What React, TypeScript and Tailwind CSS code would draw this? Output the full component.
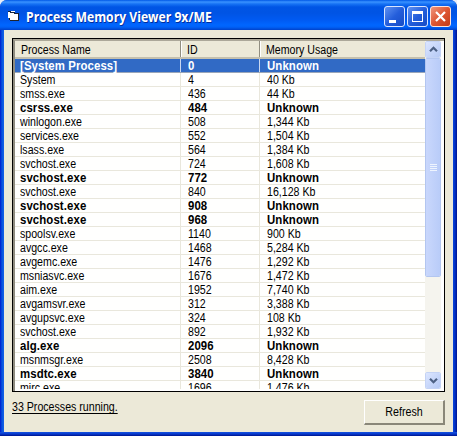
const rows: [string, string, string][] = [
  ['[System Process]', '0', 'Unknown'],
  ['System', '4', '40 Kb'],
  ['smss.exe', '436', '44 Kb'],
  ['csrss.exe', '484', 'Unknown'],
  ['winlogon.exe', '508', '1,344 Kb'],
  ['services.exe', '552', '1,504 Kb'],
  ['lsass.exe', '564', '1,384 Kb'],
  ['svchost.exe', '724', '1,608 Kb'],
  ['svchost.exe', '772', 'Unknown'],
  ['svchost.exe', '840', '16,128 Kb'],
  ['svchost.exe', '908', 'Unknown'],
  ['svchost.exe', '968', 'Unknown'],
  ['spoolsv.exe', '1140', '900 Kb'],
  ['avgcc.exe', '1468', '5,284 Kb'],
  ['avgemc.exe', '1476', '1,292 Kb'],
  ['msniasvc.exe', '1676', '1,472 Kb'],
  ['aim.exe', '1952', '7,740 Kb'],
  ['avgamsvr.exe', '312', '3,388 Kb'],
  ['avgupsvc.exe', '324', '108 Kb'],
  ['svchost.exe', '892', '1,932 Kb'],
  ['alg.exe', '2096', 'Unknown'],
  ['msnmsgr.exe', '2508', '8,428 Kb'],
  ['msdtc.exe', '3840', 'Unknown'],
  ['mirc.exe', '1696', '1,476 Kb'],
];

function Label({ text, bold }: { text: string; bold?: boolean }) {
  return (
    <span
      className={`block w-max origin-left whitespace-nowrap ${
        bold ? 'scale-x-[.95] text-[12px] font-bold tracking-[0.1px]' : 'scale-x-[.885] text-[12px]'
      }`}
    >
      {text}
    </span>
  );
}

function Row({ row, selected }: { row: [string, string, string]; selected: boolean }) {
  const bold = row[2] === 'Unknown';
  const line = selected ? 'border-[#c9d8f0]' : 'border-[#e9e7dc]';
  return (
    <div
      className={`flex h-[14px] shrink-0 border-b leading-[14px] ${
        selected ? 'border-[#9aa6b8] bg-[#316ac5] text-white' : 'border-[#e9e7dc] bg-[#fffffe] text-black'
      }`}
    >
      <div className={`w-[166px] border-r pl-[4.5px] ${line}`}>
        <Label text={row[0]} bold={bold} />
      </div>
      <div className={`w-[79px] border-r pl-[6.5px] ${line}`}>
        <Label text={row[1]} bold={bold} />
      </div>
      <div className="flex-1 pl-[6.5px]">
        <Label text={row[2]} bold={bold} />
      </div>
    </div>
  );
}

function ScrollButton({ up }: { up?: boolean }) {
  return (
    <div className="flex h-[17px] w-[16px] shrink-0 items-center justify-center rounded-[2px] border border-white bg-linear-to-br from-[#dce6ff] to-[#b5c9f5] outline-1 -outline-offset-1 outline-[#c4d3f5]">
      <svg width="9" height="7" viewBox="0 0 9 7">
        <path d={up ? 'M1 5.3 4.5 1.8 8 5.3' : 'M1 1.7 4.5 5.2 8 1.7'} fill="none" stroke="#4d6185" strokeWidth="2.2" />
      </svg>
    </div>
  );
}

export default function App() {
  return (
    <div className="h-[436px] w-[457px] bg-[#e8eef8] font-['Liberation_Sans',Arial,sans-serif] text-[12px] text-black">
      <div className="flex h-full flex-col overflow-hidden rounded-t-[7px] bg-[linear-gradient(90deg,#0019cf_0,#0855dd_2px,#1660e8_4px,#0a45dc_calc(100%-4px),#0030c4_calc(100%-2px),#00138c_100%)]">
        <header className="flex h-[30px] shrink-0 items-center bg-[linear-gradient(180deg,#0058e6_0,#3a93ff_2px,#1672f4_4px,#0055e5_7px,#0054e4_13px,#005af2_20px,#0066ff_25px,#0061f8_27px,#0042ca_30px)] pr-[6px] pl-[7px]">
          <svg width="14" height="14" viewBox="0 0 14 14" shapeRendering="crispEdges" className="mt-[2px] mr-[5px] shrink-0">
            <path d="M4 4h8v8H4z" fill="#777" />
            <path d="M3 4h8v7H3z" fill="#fff" />
            <path d="M1 2h7v8H6v1H3V9H1z" fill="#fff" />
            <path d="M1 2h3v1h4v1h3v1H7V4H3V3H1z" fill="#16233c" />
            <path d="M2 9h1v2H2zM3 11h8v1H3zM11 4h1v8h-1z" fill="#20242c" />
          </svg>
          <h1 className="mt-[3px] flex-1 text-white">
            <span className="block w-max origin-left scale-x-[.84] font-['Open_Sans',sans-serif] text-[14.5px] leading-[22px] font-bold whitespace-nowrap [text-shadow:1px_1px_0_#002c99]">
              Process Memory Viewer 9x/ME
            </span>
          </h1>
          <div className="mt-[3px] flex gap-[2px]">
            <div className="flex size-[21px] rounded-[3px] border border-[#d8e5ff] bg-linear-to-br from-[#5f91f1] via-[#245edb] to-[#164bc5]">
              <span className="mt-[13px] ml-[4px] h-[3px] w-[7px] bg-white" />
            </div>
            <div className="flex size-[21px] items-center justify-center rounded-[3px] border border-[#d8e5ff] bg-linear-to-br from-[#5f91f1] via-[#245edb] to-[#164bc5]">
              <span className="h-[11px] w-[11px] border border-t-[3px] border-white" />
            </div>
            <div className="flex size-[21px] items-center justify-center rounded-[3px] border border-[#ffe3da] bg-linear-to-br from-[#ee947b] via-[#de5632] to-[#c43b16]">
              <svg width="13" height="13" viewBox="0 0 13 13">
                <path d="m2 2 9 9m0-9-9 9" stroke="#fff" strokeWidth="2.2" />
              </svg>
            </div>
          </div>
        </header>

        <main className="mr-[4px] ml-[4px] flex-1 bg-[#ece9d8] pt-[8px] pr-[8px] pl-[8px]">
          <div className="h-[354px] w-[433px] border border-black">
            <div className="flex h-full border-t-2 border-l-2 border-t-[#aca899] border-l-[#8e8b7f] bg-white pr-[3px] pb-[2px]">
              <div className="flex flex-1 flex-col overflow-hidden">
                <div className="flex h-[18px] shrink-0 border-b-2 border-[#c4c0ae] bg-[#ece9d8] leading-[18px]">
                  <div className="w-[166px] border-r border-[#918e80] pl-[6px]">
                    <Label text="Process Name" />
                  </div>
                  <div className="w-[79px] border-r border-l border-r-[#918e80] border-l-white pl-[5px]">
                    <Label text="ID" />
                  </div>
                  <div className="flex-1 border-l border-white pl-[5px]">
                    <Label text="Memory Usage" />
                  </div>
                </div>
                {rows.map((row, i) => (
                  <Row key={i} row={row} selected={i === 0} />
                ))}
              </div>
              <div className="flex w-[16px] shrink-0 flex-col bg-[#f5f4ee]">
                <ScrollButton up />
                <div className="flex h-[219px] flex-col items-center justify-center gap-px rounded-[2px] border border-white bg-linear-to-r from-[#c9d7fc] to-[#b9ccf8] outline-1 -outline-offset-1 outline-[#b3c6f0]">
                  {[0, 1, 2, 3].map((n) => (
                    <span key={n} className="h-px w-[7px] bg-[#eef4fe]" />
                  ))}
                </div>
                <div className="flex-1" />
                <ScrollButton />
              </div>
            </div>
          </div>
          <div className="flex justify-between">
            <div className="pt-[8px] leading-[14px] underline decoration-1 underline-offset-[2px]">
              <Label text="33 Processes running." />
            </div>
            <button className="mt-[8px] flex h-[25px] w-[81px] items-center justify-center border-t border-r-2 border-b-2 border-l border-t-white border-r-[#8a8779] border-b-[#8a8779] border-l-white bg-[#ece9d8]">
              <span className="scale-x-[.89] text-[12px]">Refresh</span>
            </button>
          </div>
        </main>
        <div className="h-[4px] shrink-0 bg-linear-to-b from-[#1553e0] via-[#0838cc] to-[#00138c]" />
      </div>
    </div>
  );
}
